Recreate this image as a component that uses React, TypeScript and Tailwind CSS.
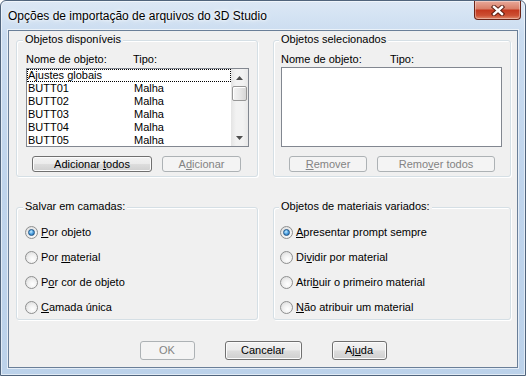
import React from "react";

function U({ children }: { children: React.ReactNode }) {
  return <span className="underline decoration-1 underline-offset-[1px]">{children}</span>;
}

function Btn({
  className,
  disabled,
  children,
}: {
  className: string;
  disabled?: boolean;
  children: React.ReactNode;
}) {
  return (
    <div
      className={`flex items-center justify-center rounded-[3px] border leading-[13px] ${
        disabled
          ? "border-[#adb2b5] bg-[#f4f4f4] text-[#838383]"
          : "border-[#707070] bg-[linear-gradient(180deg,#f2f2f2_0%,#ebebeb_48%,#dddddd_52%,#cfcfcf_100%)] shadow-[inset_0_0_0_1px_#fbfbfb]"
      } ${className}`}
    >
      <span className="whitespace-pre">{children}</span>
    </div>
  );
}

function Group({
  title,
  className,
  titleLeft,
  children,
}: {
  title: string;
  className: string;
  titleLeft: string;
  children: React.ReactNode;
}) {
  return (
    <div
      className={`relative rounded-[3px] border border-[#d5dfe5] shadow-[inset_1px_1px_0_#ffffff,1px_1px_0_#ffffff] ${className}`}
    >
      <span className={`absolute top-[-8px] ${titleLeft} px-[2px] bg-[#f0f0f0] leading-[13px]`}>{title}</span>
      {children}
    </div>
  );
}

function Radio({ checked, children }: { checked?: boolean; children: React.ReactNode }) {
  return (
    <div className="flex items-center h-[13px] gap-[3px] leading-[13px]">
      <span className="w-[13px] h-[13px] rounded-full border border-[#8e8f8f] bg-[radial-gradient(circle_at_60%_65%,#ffffff_0%,#f0f0f0_45%,#d4d4d4_100%)] flex items-center justify-center shrink-0">
        {checked && (
          <span className="w-[7px] h-[7px] rounded-full border border-[#1f5586] bg-[radial-gradient(circle_at_40%_35%,#c8edff_0%,#56a8e6_45%,#1d5fa0_100%)]" />
        )}
      </span>
      <span className="whitespace-pre">{children}</span>
    </div>
  );
}

function Arrow({ up }: { up?: boolean }) {
  return (
    <div className="h-[17px] flex items-center justify-center">
      <svg width="7" height="4" viewBox="0 0 7 4">
        {up ? <polygon points="3.5,0 7,4 0,4" fill="#4f4f4f" /> : <polygon points="0,0 7,0 3.5,4" fill="#4f4f4f" />}
      </svg>
    </div>
  );
}

const rows = ["BUTT01", "BUTT02", "BUTT03", "BUTT04", "BUTT05"];

function CloseButton() {
  return (
    <div className="mr-[4px] w-[47px] h-[19px] rounded-b-[4px] border border-t-0 border-[#6b2417] bg-[linear-gradient(180deg,#e8a99a_0%,#d9806a_42%,#c4391f_52%,#cc4f33_80%,#e08a6c_100%)] shadow-[inset_0_0_0_1px_rgba(255,255,255,0.35)] flex items-center justify-center">
      <svg width="14" height="11" viewBox="0 0 14 11">
        <path d="M3 2 L11 9 M11 2 L3 9" stroke="#4a140b" strokeOpacity="0.85" strokeWidth="4.4" strokeLinecap="square" />
        <path d="M3 2 L11 9 M11 2 L3 9" stroke="#ffffff" strokeWidth="2.4" strokeLinecap="square" />
      </svg>
    </div>
  );
}

export default function App() {
  return (
    <div className="w-[526px] h-[376px] font-['Liberation_Sans',Arial,sans-serif] text-[11px] text-black">
      <div className="w-full h-full rounded-t-[6px] border border-[#50647c] bg-[linear-gradient(180deg,#dce8f5_0%,#cadcf0_9%,#bfd4ec_50%,#bcd2ea_100%)] shadow-[inset_0_0_0_1px_rgba(255,255,255,0.55)] flex flex-col">
        <div className="h-[29px] flex items-start justify-between">
          <span className="h-[29px] flex items-center pl-[7px] text-[12px] [text-shadow:0_0_6px_#ffffff,0_0_3px_#ffffff]">
            Opções de importação de arquivos do 3D Studio
          </span>
          <CloseButton />
        </div>
        <div className="mx-[7px] h-[338px] border border-[#6a7f98] bg-[#f0f0f0] shadow-[0_0_0_1px_rgba(255,255,255,0.6)] flex flex-col pt-[9px] pl-[7px]">
          <div className="flex gap-[15px]">
            <Group title="Objetos disponíveis" className="w-[242px] h-[137px] flex flex-col" titleLeft="left-[6px]">
              <div className="flex pl-[9px] mt-[12px] leading-[13px]">
                <span className="w-[107px]">Nome de objeto:</span>
                <span>Tipo:</span>
              </div>
              <div className="ml-[9px] mt-[2px] w-[223px] h-[79px] border border-[#828790] bg-white flex overflow-hidden">
                <div className="flex-1 flex flex-col">
                  <div className="h-[13px] border border-dotted border-black leading-[11px] flex">
                    <span>Ajustes globais</span>
                  </div>
                  {rows.map((r) => (
                    <div key={r} className="h-[13px] border border-transparent leading-[11px] flex">
                      <span className="w-[106px]">{r}</span>
                      <span>Malha</span>
                    </div>
                  ))}
                </div>
                <div className="w-[17px] flex flex-col bg-[linear-gradient(90deg,#e4e4e4_0%,#f2f2f2_30%,#f2f2f2_70%,#e8e8e8_100%)]">
                  <Arrow up />
                  <div className="mx-[1px] h-[15px] rounded-[2px] border border-[#979797] bg-[linear-gradient(90deg,#f4f4f4_0%,#e8e8e8_50%,#d6d6d6_100%)] shadow-[inset_1px_1px_0_#ffffff]" />
                  <div className="flex-1" />
                  <Arrow />
                </div>
              </div>
              <div className="flex gap-[10px] ml-[15px] mt-[9px]">
                <Btn className="w-[120px] h-[16px]">
                  Adicionar <U>t</U>odos
                </Btn>
                <Btn className="w-[79px] h-[16px]" disabled>
                  A<U>d</U>icionar
                </Btn>
              </div>
            </Group>
            <Group title="Objetos selecionados" className="w-[238px] h-[137px] flex flex-col" titleLeft="left-[5px]">
              <div className="flex pl-[7px] mt-[12px] leading-[13px]">
                <span className="w-[109px]">Nome de objeto:</span>
                <span>Tipo:</span>
              </div>
              <div className="ml-[7px] mt-[1px] w-[221px] h-[80px] border border-[#828790] bg-white" />
              <div className="flex gap-[10px] ml-[15px] mt-[9px]">
                <Btn className="w-[78px] h-[16px]" disabled>
                  <U>R</U>emover
                </Btn>
                <Btn className="w-[118px] h-[16px]" disabled>
                  Remo<U>v</U>er todos
                </Btn>
              </div>
            </Group>
          </div>
          <div className="flex gap-[15px] mt-[30px]">
            <Group title="Salvar em camadas:" className="w-[242px] h-[113px]" titleLeft="left-[6px]">
              <div className="flex flex-col gap-[12px] pt-[18px] pl-[8px]">
                <Radio checked>
                  <U>P</U>or objeto
                </Radio>
                <Radio>
                  Por <U>m</U>aterial
                </Radio>
                <Radio>
                  P<U>o</U>r cor de objeto
                </Radio>
                <Radio>
                  <U>C</U>amada única
                </Radio>
              </div>
            </Group>
            <Group title="Objetos de materiais variados:" className="w-[238px] h-[113px]" titleLeft="left-[5px]">
              <div className="flex flex-col gap-[12px] pt-[18px] pl-[6px]">
                <Radio checked>
                  <U>A</U>presentar prompt sempre
                </Radio>
                <Radio>
                  Di<U>v</U>idir por material
                </Radio>
                <Radio>
                  Atri<U>b</U>uir o primeiro material
                </Radio>
                <Radio>
                  <U>N</U>ão atribuir um material
                </Radio>
              </div>
            </Group>
          </div>
          <div className="flex justify-center gap-[30px] mt-[21px] -ml-[7px]">
            <Btn className="w-[55px] h-[19px]" disabled>
              OK
            </Btn>
            <Btn className="w-[77px] h-[19px]">Cancelar</Btn>
            <Btn className="w-[55px] h-[19px]">
              Aj<U>u</U>da
            </Btn>
          </div>
        </div>
      </div>
    </div>
  );
}
